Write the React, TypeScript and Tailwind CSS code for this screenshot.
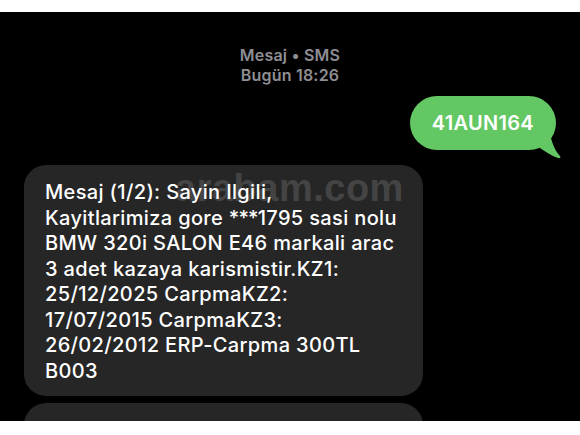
export default function App() {
  const lines: React.ReactNode[] = [
    "Mesaj (1/2): Sayin Ilgili,",
    <>Kayitlarimiza gore <span className="tracking-[-0.8px]">***</span>1795 sasi nolu</>,
    "BMW 320i SALON E46 markali arac",
    "3 adet kazaya karismistir.KZ1:",
    "25/12/2025 CarpmaKZ2:",
    "17/07/2015 CarpmaKZ3:",
    "26/02/2012 ERP-Carpma 300TL",
    "B003",
  ];
  return (
    <div className="w-[580px] h-[435px] bg-white" style={{ fontFamily: "Inter, 'Liberation Sans', sans-serif" }}>
      <div className="h-[12px]" />
      <div className="relative h-[409px] bg-black overflow-hidden flex flex-col">
        <div className="shrink-0 pt-[33px] flex flex-col items-center text-[#8e8e93] text-[16px] font-semibold leading-[20px] tracking-[0.2px]">
          <div>Mesaj • SMS</div>
          <div>Bugün 18:26</div>
        </div>
        <div className="shrink-0 flex justify-end pr-[24px] mt-[11px]">
          <div className="relative">
            <div className="h-[54px] px-[22px] rounded-[27px] bg-[#63c763] text-white text-[20px] font-semibold flex items-center tracking-[0.3px]">
              41AUN164
            </div>
            <svg className="absolute right-[-10px] bottom-[-10px]" width="30" height="26" viewBox="0 0 30 26">
              <path d="M2 0 L14 0 C16 10 20 18 24 22 C25 23.5 24 24.5 22 24 C16 22 10 18 4 14 Z" fill="#63c763" />
            </svg>
          </div>
        </div>
        <div className="shrink-0 ml-[24px] mt-[15px] w-[399px] h-[231px] rounded-[22px] bg-[#262626] relative pl-[21px] pt-[15px]">
          <div className="absolute left-[151px] top-[-5px] text-[38px] font-bold text-[#444444] tracking-[0.5px]" style={{ fontFamily: "'Liberation Sans', Arial, sans-serif" }}>
            arabam.com
          </div>
          <div className="relative text-white text-[20px] font-medium leading-[25.5px] tracking-[0.35px]">
            {lines.map((l, i) => (
              <div key={i} className="whitespace-nowrap">{l}</div>
            ))}
          </div>
        </div>
        <div className="ml-[24px] mt-[7px] w-[399px] h-[60px] rounded-[22px] bg-[#262626] shrink-0" />
      </div>
    </div>
  );
}
